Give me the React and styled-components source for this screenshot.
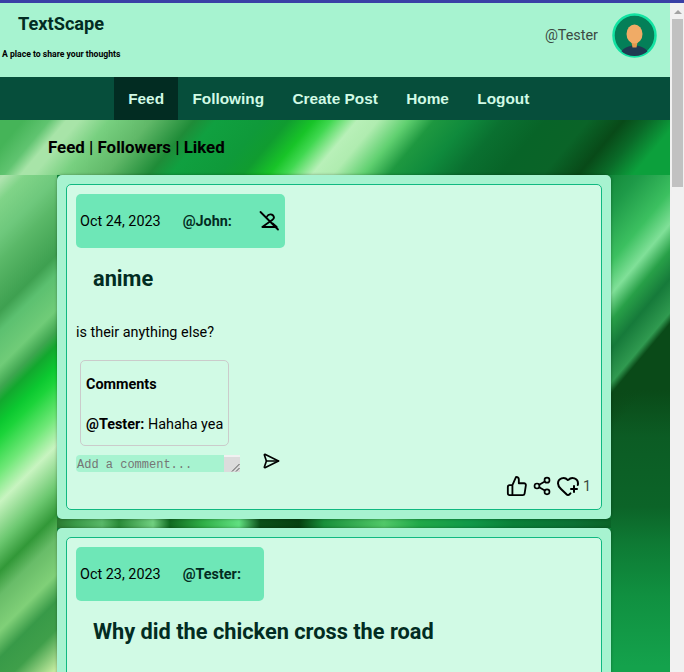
import React from 'react'
import styled, { createGlobalStyle } from 'styled-components'
import { TbSend2 } from 'react-icons/tb'
import { FiThumbsUp } from 'react-icons/fi'
import { Share2, HeartPlus } from 'lucide-react'

const GlobalStyle = createGlobalStyle`
  html, body {
    height: 100%;
    overflow: hidden;
  }
  body {
    margin: 0;
    font-family: Roboto, sans-serif;
    color: #000;
  }
  #root {
    height: 100%;
  }
`

const Window = styled.div`
  height: 100%;
  box-sizing: border-box;
  border-top: 3px solid #3a3fa6;
  display: flex;
`

const Page = styled.div`
  flex: 1;
  min-width: 0;
  overflow: hidden;
`

const ScrollTrack = styled.div`
  width: 14px;
  flex-shrink: 0;
  background: #f1f1f1;
  display: flex;
  flex-direction: column;
  align-items: flex-end;
  padding-right: 1px;
  box-sizing: border-box;
`

const ScrollUp = styled.div`
  width: 11px;
  height: 16px;
  display: flex;
  justify-content: center;
  padding-top: 7px;
  box-sizing: border-box;
  &::before {
    content: '';
    border-left: 4px solid transparent;
    border-right: 4px solid transparent;
    border-bottom: 4px solid #a3a3a3;
    height: 0;
  }
`

const ScrollThumb = styled.div`
  width: 11px;
  height: 168px;
  background: #c1c1c1;
`

const Header = styled.header`
  height: 74px;
  background: #a7f3d0;
  display: flex;
  justify-content: space-between;
`

const Brand = styled.div`
  padding-left: 2px;
`

const Title = styled.h1`
  margin: 10px 0 0 16px;
  font-size: 18.2px;
  line-height: 21px;
  font-weight: 700;
  color: #022c22;
`

const Tagline = styled.p`
  margin: 14px 0 0;
  font-size: 8.64px;
  line-height: 12px;
  font-weight: 700;
`

const UserBox = styled.div`
  display: flex;
  align-items: center;
  gap: 14px;
  padding: 0 13px 10px 0;
  height: 64px;
`

const UserName = styled.span`
  font-size: 14.4px;
  color: #3b4a42;
`

const Avatar = styled.svg`
  width: 45px;
  height: 45px;
`

const Nav = styled.nav`
  height: 43px;
  background: #064e3b;
  display: flex;
  padding-left: 114px;
`

const NavItem = styled.a`
  display: flex;
  align-items: center;
  padding: 0 14.2px;
  font-family: 'Liberation Sans', Arial, sans-serif;
  font-size: 15.36px;
  font-weight: 700;
  color: #d1fae5;
  background: ${({ $active }) => ($active ? '#022c22' : 'transparent')};
`

const Main = styled.main`
  min-height: 2400px;
  padding: 18px 0 0;
  background-color: #0f8a3c;
  background-repeat: no-repeat;
  background-image:
    linear-gradient(130deg, #45b458 18px, #60c470 38px, #a8e4a8 51px, #a8e4a8 61px, #78d080 84px, #60b868 116px,
      #1f8c38 149px, #10a040 166px, #0f9a3a 202px, #109c30 221px, #18c428 241px, #40d850 254px, #b8f0b8 274px,
      #b0ecb0 290px, #60d070 313px, #1e9840 333px, #0f8a3c 359px, #0a7030 386px, #086428 418px, #0a6428 451px,
      #084a18 478px, #0a6a28 497px, #0ca03c 520px),
    linear-gradient(90deg, #2a7a30 0, #3a9a48 19px, #58b868 45px, #2a8a38 62px, #70d080 96px, #0f6a20 113px,
      #30b048 147px, #60e080 182px, #0a5018 203px, #064010 242px, #18903a 267px, #50c868 327px, #20a848 362px,
      #109848 413px, #0a8038 456px, #0c7034 516px, #0a6428 552px),
    linear-gradient(130deg, #0a5020 0, #0a7a30 23px, #189040 44px, #1e9a48 57px, #3cc060 91px, #80e098 112px,
      #28a048 129px, #167a3a 147px, #309a50 169px, #0a4a18 176px, transparent 200px),
    linear-gradient(180deg, #0a4a18 270px, #0c5c24 317px, #0c6428 387px, #0e7a34 423px, #109040 475px, #14a24c 546px),
    linear-gradient(135deg, #4db860 0, #b0e4b0 42px, #80d488 57px, #6ec87c 82px, #5ab868 100px, #3ea050 135px,
      #5cc070 149px, #70cc78 174px, #3fa650 189px, #12a82e 199px, #0cc830 214px, #1cd43a 224px, #70e878 249px,
      #c8f4c0 270px, #6cc870 299px, #329838 319px, #68bc68 336px, #80d078 361px, #389a48 380px, #3f9f4a 400px, #c4eca0 428px);
  background-size:
    100% 55px,
    554px 10px,
    59px 552px,
    59px 552px,
    57px 552px;
  background-position:
    0 0,
    57px 398px,
    611px 0,
    611px 0,
    0 0;
`

const Tabs = styled.h2`
  margin: 0 0 18px 48px;
  font-size: 16.9px;
  line-height: 19px;
  font-weight: 700;
`

const Feed = styled.div`
  width: 554px;
  margin-left: 57px;
  display: flex;
  flex-direction: column;
  gap: 9px;
`

const Card = styled.article`
  padding: 9px;
  background: #a7f3d0;
  border-radius: 5px;
  box-shadow: 0 0 3px rgba(0, 0, 0, 0.35);
`

const Inner = styled.div`
  padding: 9px 9px 11px;
  min-height: ${({ $minHeight }) => $minHeight || 0}px;
  background: #d1fae5;
  border: 1px solid #10b981;
  border-radius: 5px;
`

const Meta = styled.div`
  display: inline-flex;
  align-items: center;
  height: 54px;
  padding: 0 4px;
  background: #6ee7b7;
  border-radius: 5px;
  font-size: 14.4px;
  vertical-align: top;
`

const PostDate = styled.span`
  margin-right: 22px;
`

const Author = styled.strong`
  margin-right: 19px;
  color: #022c22;
`

const UnfollowIcon = styled.svg`
  width: 24px;
  height: 24px;
  margin-left: 6px;
  fill: none;
  stroke: #000;
  stroke-width: 1.8;
  stroke-linecap: round;
  stroke-linejoin: round;
`

const PostTitle = styled.h3`
  margin: 17px 0 0 17px;
  font-size: 21.76px;
  line-height: 28px;
  font-weight: 700;
  color: #022c22;
`

const PostBody = styled.p`
  margin: 32px 0 0;
  font-size: 14.4px;
  line-height: 16px;
`

const Comments = styled.section`
  width: fit-content;
  margin: 19px 0 0 4px;
  padding: 16px 5px 12px 5px;
  border: 1px solid #cbcbcb;
  border-radius: 5px;
  font-size: 14.4px;
  line-height: 16px;
`

const CommentsTitle = styled.h4`
  margin: 0 0 24px;
  font-size: 14.4px;
  line-height: 16px;
  font-weight: 700;
`

const CommentForm = styled.form`
  display: flex;
  align-items: flex-start;
  margin-top: 9px;
  height: 17px;
`

const CommentInput = styled.textarea`
  width: 148px;
  height: 17px;
  padding: 3px 1px 0;
  box-sizing: border-box;
  border: none;
  outline: none;
  resize: none;
  overflow: hidden;
  border-radius: 4px 0 0 4px;
  background: #a7f3d0;
  font-family: 'Liberation Mono', monospace;
  font-size: 12px;
  line-height: 14px;
  &::placeholder {
    color: #757575;
  }
`

const ResizeCorner = styled.div`
  width: 16px;
  height: 17px;
  display: flex;
  align-items: flex-end;
  justify-content: flex-end;
  background: linear-gradient(#f1f1f1 0 2px, #dcdcdc 2px);
`

const SendButton = styled.button`
  display: flex;
  margin: -4px 0 0 21px;
  padding: 0;
  border: none;
  background: none;
  color: #000;
  font-size: 20px;
`

const Actions = styled.div`
  display: flex;
  justify-content: flex-end;
  align-items: center;
  gap: 4px;
  height: 24px;
  margin-top: 2px;
`

const LikeCount = styled.span`
  margin-left: -1px;
  width: 9px;
  font-size: 14.4px;
  color: #3b4a42;
`

const App = () => {
  return (
    <Window>
      <GlobalStyle />
      <Page>
        <Header>
          <Brand>
            <Title>TextScape</Title>
            <Tagline>A place to share your thoughts</Tagline>
          </Brand>
          <UserBox>
            <UserName>@Tester</UserName>
            <Avatar viewBox="0 0 45 45">
              <defs>
                <clipPath id="avatarClip">
                  <circle cx="22.5" cy="22.5" r="20.5" />
                </clipPath>
              </defs>
              <circle cx="22.5" cy="22.5" r="21" fill="#047f58" stroke="#12e3a2" strokeWidth="2.5" />
              <g clipPath="url(#avatarClip)">
                <path d="M7 45c0-8 6-11 15.500-13 9.500 2 15.500 5 15.500 13z" fill="#1f3a52" />
                <path d="M19 27h7l-1.500 7.500h-4z" fill="#e09a50" />
                <ellipse cx="22.500" cy="21" rx="8" ry="9.500" fill="#f0ab66" />
              </g>
            </Avatar>
          </UserBox>
        </Header>
        <Nav>
          <NavItem $active>Feed</NavItem>
          <NavItem>Following</NavItem>
          <NavItem>Create Post</NavItem>
          <NavItem>Home</NavItem>
          <NavItem>Logout</NavItem>
        </Nav>
        <Main>
          <Tabs>Feed | Followers | Liked</Tabs>
          <Feed>
            <Card>
              <Inner>
                <Meta>
                  <PostDate>Oct 24, 2023</PostDate>
                  <Author>@John:</Author>
                  <UnfollowIcon viewBox="0 0 24 24">
                    <path d="M10 7.500A3.700 3.700 0 0 1 17 8.200Q17 10 13.700 12L5.300 18H19.700L15.700 14.500" />
                    <path d="M3.500 3L21 20.500" />
                  </UnfollowIcon>
                </Meta>
                <PostTitle>anime</PostTitle>
                <PostBody>is their anything else?</PostBody>
                <Comments>
                  <CommentsTitle>Comments</CommentsTitle>
                  <div>
                    <strong>@Tester:</strong> Hahaha yea
                  </div>
                </Comments>
                <CommentForm>
                  <CommentInput placeholder="Add a comment..." />
                  <ResizeCorner>
                    <svg width="9" height="9" viewBox="0 0 9 9" stroke="#555" strokeWidth="1">
                      <path d="M1 8.500L8.500 1M5 8.500L8.500 5" />
                    </svg>
                  </ResizeCorner>
                  <SendButton type="button">
                    <TbSend2 />
                  </SendButton>
                </CommentForm>
                <Actions>
                  <FiThumbsUp size={22} />
                  <Share2 size={20} />
                  <HeartPlus size={24} />
                  <LikeCount>1</LikeCount>
                </Actions>
              </Inner>
            </Card>
            <Card>
              <Inner $minHeight={320}>
                <Meta>
                  <PostDate>Oct 23, 2023</PostDate>
                  <Author>@Tester:</Author>
                </Meta>
                <PostTitle>Why did the chicken cross the road</PostTitle>
              </Inner>
            </Card>
          </Feed>
        </Main>
      </Page>
      <ScrollTrack>
        <ScrollUp />
        <ScrollThumb />
      </ScrollTrack>
    </Window>
  )
}

export default App
